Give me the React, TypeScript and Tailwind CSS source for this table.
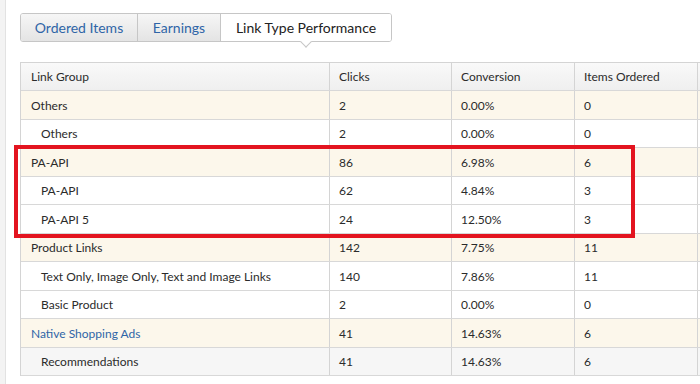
import React from "react";

type Row = { name: string; clicks: string; conv: string; items: string; kind: "parent" | "child" | "link" | "hover" };

const rows: Row[] = [
  { name: "Others", clicks: "2", conv: "0.00%", items: "0", kind: "parent" },
  { name: "Others", clicks: "2", conv: "0.00%", items: "0", kind: "child" },
  { name: "PA-API", clicks: "86", conv: "6.98%", items: "6", kind: "parent" },
  { name: "PA-API", clicks: "62", conv: "4.84%", items: "3", kind: "child" },
  { name: "PA-API 5", clicks: "24", conv: "12.50%", items: "3", kind: "child" },
  { name: "Product Links", clicks: "142", conv: "7.75%", items: "11", kind: "parent" },
  { name: "Text Only, Image Only, Text and Image Links", clicks: "140", conv: "7.86%", items: "11", kind: "child" },
  { name: "Basic Product", clicks: "2", conv: "0.00%", items: "0", kind: "child" },
  { name: "Native Shopping Ads", clicks: "41", conv: "14.63%", items: "6", kind: "link" },
  { name: "Recommendations", clicks: "41", conv: "14.63%", items: "6", kind: "hover" },
];

const heights = ["h-[29px]", "h-[28px]", "h-[29px]", "h-[28px]", "h-[29px]", "h-[28px]", "h-[29px]", "h-[28px]", "h-[29px]", "h-[28px]"];

export default function App() {
  return (
    <div className="relative w-[700px] h-[384px] bg-white flex overflow-hidden font-['Lato',sans-serif] text-[#2b2b2b]">
      <div className="w-[6px] shrink-0 bg-[#f3f3f3] border-r border-[#e2e2e2]" />
      <div className="flex-1 pl-[14px] pt-[13px] flex flex-col">
        <div className="flex h-[29px] w-fit border border-[#c6c6c6] rounded-[3px] text-[14px]">
          <div className="w-[117px] border-r border-[#c6c6c6] rounded-l-[2px] bg-gradient-to-b from-[#f6f6f6] to-[#e4e4e4] text-[#2f65a7] flex items-center justify-center">
            Ordered Items
          </div>
          <div className="w-[83px] border-r border-[#c6c6c6] bg-gradient-to-b from-[#f6f6f6] to-[#e4e4e4] text-[#2f65a7] flex items-center justify-center">
            Earnings
          </div>
          <div className="relative w-[170px] bg-white rounded-r-[2px] text-[#222] flex items-center justify-center">
            Link Type Performance
            <div className="absolute left-[81px] bottom-[-5px] w-[8px] h-[8px] rotate-45 bg-white border-r border-b border-[#c6c6c6]" />
          </div>
        </div>

        <div className="mt-[20px] w-[900px] border-l border-t border-[#d4d4d4] text-[12px]">
          <div className="grid grid-cols-[308px_122px_123px_123px_200px] h-[28px] border-b border-[#d8d8d8] bg-gradient-to-b from-[#f9f9f9] to-[#efefef]">
            <div className="pl-[10px] flex items-center">Link Group</div>
            <div className="pl-[9px] flex items-center border-l border-[#d4d4d4]">Clicks</div>
            <div className="pl-[9px] flex items-center border-l border-[#d4d4d4]">Conversion</div>
            <div className="pl-[9px] flex items-center border-l border-[#d4d4d4]">Items Ordered</div>
            <div className="pl-[9px] flex items-center border-l border-[#d4d4d4]"></div>
          </div>
          {rows.map((r, i) => {
            const bg =
              r.kind === "parent" || r.kind === "link"
                ? "bg-[#fcf7eb]"
                : r.kind === "hover"
                ? "bg-[#f6f6f6]"
                : "bg-white";
            const indent = r.kind === "child" || r.kind === "hover" ? "pl-[20px]" : "pl-[10px]";
            const color = r.kind === "link" ? "text-[#2f65a7]" : "";
            return (
              <div
                key={i}
                className={`grid grid-cols-[308px_122px_123px_123px_200px] ${heights[i]} border-b border-[#d8d8d8] ${bg}`}
              >
                <div className={`${indent} ${color} flex items-center pt-[1px]`}>{r.name}</div>
                <div className="pl-[9px] flex items-center pt-[1px] border-l border-[#d4d4d4]">{r.clicks}</div>
                <div className="pl-[9px] flex items-center pt-[1px] border-l border-[#d4d4d4]">{r.conv}</div>
                <div className="pl-[9px] flex items-center pt-[1px] border-l border-[#d4d4d4]">{r.items}</div>
                <div className="pl-[9px] flex items-center border-l border-[#d4d4d4]"></div>
              </div>
            );
          })}
        </div>
      </div>
      <div className="absolute left-[14px] top-[145px] w-[621px] h-[93px] border-4 border-[#e3141f]" />
    </div>
  );
}
